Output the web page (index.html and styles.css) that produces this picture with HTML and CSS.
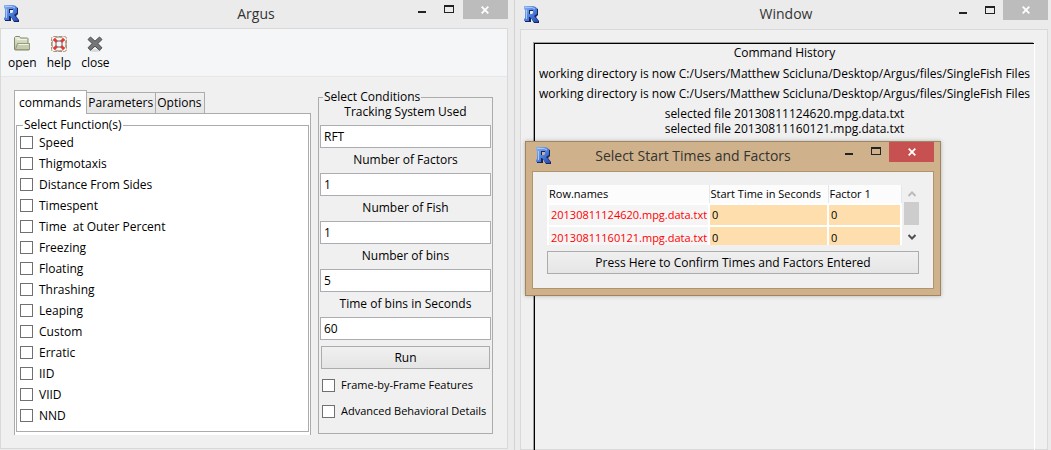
FILE: index.html
```html
<!DOCTYPE html>
<html lang="en">
<head>
<meta charset="utf-8">
<title>Argus</title>
<link rel="stylesheet" href="styles.css">
</head>
<body>
<svg class="defs" aria-hidden="true">
  <defs>
    <linearGradient id="blue" x1="0" y1="0" x2="1" y2="1"><stop offset="0" stop-color="#8db5ef"/><stop offset=".5" stop-color="#4f80df"/><stop offset="1" stop-color="#2448b4"/></linearGradient>
    <linearGradient id="olive" x1="0" y1="0" x2="0" y2="1"><stop offset="0" stop-color="#e6e9d8"/><stop offset="1" stop-color="#b5bb9b"/></linearGradient>
    <symbol id="logo" viewBox="0 0 15 17">
      <path fill="#15265e" fill-rule="evenodd" d="M1 1h9l4 2v6l-2 2 3 4v2h-5l-3-5v4H1v-2l1-1V5L1 4zM6 5v3h3V5z"/>
      <path fill="url(#blue)" fill-rule="evenodd" d="M0 0h9l3 1 1 2v5l-3 2 4 4v2h-4l-4-5H5v4H0v-2l1-1V4L0 3zM5 4v4h3l1-1V4z"/>
      <path fill="none" stroke="#a7c8f5" d="M1 1.500h7l3 1.500M2.500 4v9"/>
    </symbol>
    <symbol id="min" viewBox="0 0 8 9"><path fill="#222" d="M0 6h8v2H0z"/></symbol>
    <symbol id="max" viewBox="0 0 10 9"><path fill="#222" fill-rule="evenodd" d="M0 0h10v8H0zM1 2v5h8V2z"/></symbol>
    <symbol id="x" viewBox="0 0 8 8"><path fill="none" stroke="#fff" stroke-width="1.800" d="M.7.7l6.600 6.600M7.300.7L.7 7.300"/></symbol>
  </defs>
</svg>
<main class="desktop">
  <section class="window window-main">
    <header class="titlebar">
      <svg class="logo"><use href="#logo"/></svg>
      <h1 class="title">Argus</h1>
      <div class="controls">
        <button class="control" aria-label="Minimize"><svg width="8" height="9"><use href="#min"/></svg></button>
        <button class="control" aria-label="Maximize"><svg width="10" height="9"><use href="#max"/></svg></button>
        <button class="control control-close" aria-label="Close window"><svg width="8" height="8"><use href="#x"/></svg></button>
      </div>
    </header>
    <div class="client">
      <nav class="toolbar">
        <button class="tool"><svg width="16" height="16" viewBox="0 0 16 16"><path fill="url(#olive)" stroke="#85896b" d="M.5 13.500v-12l1-1h4l1 1.500h7l.5.500v5h1.500v6l-.5.500H1z"/><path fill="#c5cbad" stroke="#969b7c" d="M3.500 7.500h12v6h-14z"/><path stroke="#f1f3e5" d="M2 2h3.500M3 3.500h10M4.500 8.500h10"/></svg>open</button>
        <button class="tool"><svg width="16" height="16" viewBox="0 0 16 16"><rect x=".5" y=".5" width="15" height="15" rx="2" fill="#f5f1ea" stroke="#b09670" stroke-dasharray="4 1"/><circle cx="8" cy="8" r="7" fill="#f8f5f2" stroke="#9a918c"/><path stroke="#ee3434" stroke-width="3" d="M3 3l3 3M13 3l-3 3M3 13l3-3M13 13l-3-3"/><rect x="5" y="5" width="6" height="6" rx="2" fill="#f5f6f8" stroke="#6f5b5a"/></svg>help</button>
        <button class="tool"><svg width="16" height="16" viewBox="0 0 16 16"><ellipse cx="8" cy="14.500" rx="6" ry="1.500" fill="#d9dadc"/><path fill="#747775" stroke="#484b49" stroke-linejoin="round" d="M3.500 1L8 5.200 12.500 1 15 3.500 10.800 7.500 15 11.800 12.500 14.200 8 10.200 3.500 14.200 1 11.800 5.200 7.500 1 3.500z"/></svg>close</button>
      </nav>
      <div class="panels">
        <div class="notebook">
          <div class="tabs" role="tablist">
            <button class="tab tab-active" role="tab" aria-selected="true">commands</button>
            <button class="tab" role="tab" aria-selected="false">Parameters</button>
            <button class="tab" role="tab" aria-selected="false">Options</button>
            <span class="tabs-rest"></span>
          </div>
          <div class="page" role="tabpanel">
            <fieldset class="group functions">
              <legend>Select Function(s)</legend>
              <label class="check"><input type="checkbox">Speed</label>
              <label class="check"><input type="checkbox">Thigmotaxis</label>
              <label class="check"><input type="checkbox">Distance From Sides</label>
              <label class="check"><input type="checkbox">Timespent</label>
              <label class="check"><input type="checkbox">Time&nbsp; at Outer Percent</label>
              <label class="check"><input type="checkbox">Freezing</label>
              <label class="check"><input type="checkbox">Floating</label>
              <label class="check"><input type="checkbox">Thrashing</label>
              <label class="check"><input type="checkbox">Leaping</label>
              <label class="check"><input type="checkbox">Custom</label>
              <label class="check"><input type="checkbox">Erratic</label>
              <label class="check"><input type="checkbox">IID</label>
              <label class="check"><input type="checkbox">VIID</label>
              <label class="check"><input type="checkbox">NND</label>
            </fieldset>
          </div>
        </div>
        <fieldset class="group conditions">
          <legend>Select Conditions</legend>
          <label class="field">Tracking System Used<input type="text" value="RFT"></label>
          <label class="field">Number of Factors<input type="text" value="1"></label>
          <label class="field">Number of Fish<input type="text" value="1"></label>
          <label class="field">Number of bins<input type="text" value="5"></label>
          <label class="field">Time of bins in Seconds<input type="text" value="60"></label>
          <div class="run"><button class="push">Run</button></div>
          <label class="check"><input type="checkbox">Frame-by-Frame Features</label>
          <label class="check"><input type="checkbox">Advanced Behavioral Details</label>
        </fieldset>
      </div>
    </div>
  </section>

  <section class="window window-history">
    <header class="titlebar">
      <svg class="logo"><use href="#logo"/></svg>
      <h2 class="title">Window</h2>
      <div class="controls">
        <button class="control" aria-label="Minimize"><svg width="8" height="9"><use href="#min"/></svg></button>
        <button class="control" aria-label="Maximize"><svg width="10" height="9"><use href="#max"/></svg></button>
        <button class="control control-close" aria-label="Close window"><svg width="8" height="8"><use href="#x"/></svg></button>
      </div>
    </header>
    <div class="client">
      <div class="history">
        <h3>Command History</h3>
        <p>working directory is now C:/Users/Matthew Scicluna/Desktop/Argus/files/SingleFish Files</p>
        <p>working directory is now C:/Users/Matthew Scicluna/Desktop/Argus/files/SingleFish Files</p>
        <p>selected file 20130811124620.mpg.data.txt<br>selected file 20130811160121.mpg.data.txt</p>
      </div>
    </div>
  </section>

  <section class="dialog" role="dialog" aria-labelledby="dialog-title">
    <header class="titlebar">
      <svg class="logo"><use href="#logo"/></svg>
      <h2 class="title" id="dialog-title">Select Start Times and Factors</h2>
      <div class="controls">
        <button class="control" aria-label="Minimize"><svg width="8" height="9"><use href="#min"/></svg></button>
        <button class="control" aria-label="Maximize"><svg width="10" height="9"><use href="#max"/></svg></button>
        <button class="control control-close" aria-label="Close window"><svg width="8" height="8"><use href="#x"/></svg></button>
      </div>
    </header>
    <div class="client">
      <div class="scroller">
        <div class="viewport">
          <table class="times">
            <thead><tr><th class="col-name">Row.names</th><th class="col-time">Start Time in Seconds</th><th>Factor 1</th></tr></thead>
            <tbody>
              <tr><td class="name">20130811124620.mpg.data.txt</td><td>0</td><td>0</td></tr>
              <tr><td class="name">20130811160121.mpg.data.txt</td><td>0</td><td>0</td></tr>
            </tbody>
          </table>
        </div>
        <div class="scrollbar">
          <button class="arrow arrow-up" aria-label="Scroll up"><svg width="8" height="6" viewBox="0 0 8 6"><path d="M.5 5L4 1.500 7.500 5"/></svg></button>
          <div class="thumb"></div>
          <button class="arrow" aria-label="Scroll down"><svg width="8" height="6" viewBox="0 0 8 6"><path d="M.5 1L4 4.500 7.500 1"/></svg></button>
        </div>
      </div>
      <button class="push">Press Here to Confirm Times and Factors Entered</button>
    </div>
  </section>
</main>
</body>
</html>
```
FILE: styles.css
```css
* { box-sizing: border-box; }
body {
  margin: 0;
  background: #ebebeb;
  color: #000;
  font: 12px/16px "Open Sans", "Noto Sans", sans-serif;
}
button, input { font: inherit; color: inherit; }
button { padding: 0; border: 0; background: none; }
h1, h2, h3, p { margin: 0; font: inherit; }
fieldset { min-width: 0; margin: 0; padding: 0; }
svg { display: block; }
.defs { position: absolute; width: 0; height: 0; }

.desktop {
  position: relative;
  display: flex;
  height: 100vh;
  overflow: hidden;
}
.window { display: flex; flex-direction: column; background: #ebebeb; }
.window-main { flex: 0 0 49%; padding: 0 6px 1px 0; border-right: 1px solid #d2d2d2; }
.window-history { flex: 1; padding: 0 3px 0 5px; }
.client { flex: 1; border: 1px solid #d9d9d9; background: #f0f0f0; }

.titlebar {
  display: grid;
  flex: none;
  grid-template-columns: 1fr auto 1fr;
  align-items: start;
  height: 28px;
  padding-left: 4px;
}
.window-main .titlebar { padding: 0 4px 0 4px; padding-right: 0; }
.window-history .titlebar { height: 29px; padding-left: 4px; }
.logo { width: 15px; height: 17px; margin-top: 5px; }
.title { margin-top: 3px; color: #333; font-size: 14px; line-height: 22px; }
.controls { display: flex; justify-content: flex-end; }
.control { display: grid; place-items: center; width: 27px; height: 19px; }
.control-close { width: 45px; background: #bcbcbc; }
.window-history .logo { margin-top: 6px; }
.window-history .control { height: 20px; }

.toolbar {
  display: flex;
  gap: 10px;
  height: 48px;
  padding: 7px 7px 0;
  border-bottom: 1px solid #e6e6e6;
  background: #f5f6f8;
}
.tool { display: flex; flex-direction: column; align-items: center; gap: 3px; }

.panels { display: flex; gap: 7px; padding: 13px 14px 13px 13px; }
.notebook { flex: 1; }
.tabs { display: flex; align-items: flex-end; height: 24px; }
.tab {
  height: 24px;
  margin-top: 2px;
  padding: 0 2px 0 1px;
  border: 1px solid #acacac;
  border-left: 0;
  background: linear-gradient(#f0f0f0, #e5e5e5);
}
.tab:not(.tab-active) { height: 22px; }
.tab-active {
  margin-top: 0;
  padding: 0 5px 0 4px;
  border-left: 1px solid #acacac;
  border-bottom: 0;
  background: #fff;
}
.tabs-rest { flex: 1; border-bottom: 1px solid #acacac; }
.page {
  padding: 4px 1px 3px;
  border: 1px solid #acacac;
  border-width: 0 1px;
  background: #fff;
}
.group { border: 1px solid #acacac; }
.group legend { margin-left: 3px; padding: 0 1px; line-height: 14px; }
.check { display: flex; align-items: center; gap: 6px; height: 21px; white-space: nowrap; }
.check input {
  appearance: none;
  flex: none;
  width: 13px;
  height: 13px;
  margin: 0;
  border: 1px solid #707070;
  background: #fff;
}
.functions { padding: 0 3px 5px; }
.conditions { width: 175px; margin-bottom: 1px; padding: 0 1px; }
.field { display: flex; flex-direction: column; gap: 5px; height: 48px; text-align: center; }
.field input {
  width: 100%;
  height: 23px;
  padding: 0 3px;
  border: 1px solid #abadb3;
  background: #fff;
}
.push {
  display: block;
  width: 100%;
  height: 23px;
  border: 1px solid #acacac;
  background: linear-gradient(#f0f0f0, #e5e5e5);
}
.run { padding: 2px 1px 3px; }
.conditions .check { height: 26px; padding-left: 2px; font-size: 11px; }

.history {
  height: 100%;
  margin: 13px 13px 0;
  border: 1px solid #000;
  border-width: 1px 0 0 1px;
  box-shadow: -1px -1px #a0a0a0, 1px 0 #fff;
  text-align: center;
  white-space: nowrap;
}
.history h3 { line-height: 17px; }
.history p { margin-top: 5px; line-height: 15px; }

.dialog {
  position: absolute;
  top: 141px;
  left: 525px;
  width: 416px;
  padding: 0 6px 6px;
  border: 1px solid #a08560;
  background: #cfb28b;
  box-shadow: 0 0 4px #0004;
}
.dialog .titlebar { display: flex; justify-content: space-between; height: 29px; }
.dialog .control-close { height: 20px; background: #c75050; }
.dialog .client { padding: 13px 14px 14px; border-color: #b0946c; }
.scroller { display: flex; gap: 2px; height: 60px; margin-bottom: 6px; }
.viewport { flex: 1; overflow: hidden; background: #fff; }
.times { width: 100%; border-collapse: collapse; table-layout: fixed; font-size: 11px; }
.times th { height: 19px; padding: 0 1px; border-right: 1px solid #e0e8f3; font-weight: 400; text-align: left; background: #fcfcfc; white-space: nowrap; }
.times .col-name { width: 161px; }
.times .col-time { width: 119px; }
.times td { height: 22px; padding: 0 2px; border: 2px solid #fff; border-bottom-width: 0; background: #ffdead; }
.times .name { background: #f5f5f5; color: #f00; }
.scrollbar { display: flex; flex-direction: column; width: 15px; }
.arrow { display: grid; place-items: center; height: 17px; }
.arrow path { fill: none; stroke: #505050; stroke-width: 2; }
.arrow-up path { stroke: #bcbcbc; }
.thumb { flex: 1; margin-bottom: 3px; background: #cdcdcd; }
```
